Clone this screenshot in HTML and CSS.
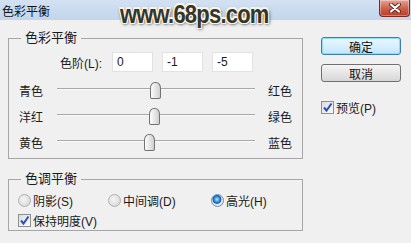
FILE: index.html
```html
<!DOCTYPE html>
<html lang="zh-CN">
  <head>
    <meta charset="UTF-8" />
    <title>色彩平衡</title>
    <link rel="stylesheet" href="styles.css">
  </head>
  <body>
    <header class="titlebar">
      <span class="title">色彩平衡</span>
      <button class="close" aria-label="关闭">
        <svg width="14" height="10" viewBox="0 0 14 10">
          <path d="M3 1.5 L11 8.5 M11 1.5 L3 8.5" stroke="#5a2a22" stroke-width="4" stroke-linecap="round" />
          <path d="M3 1.5 L11 8.5 M11 1.5 L3 8.5" stroke="#ffffff" stroke-width="2.2" stroke-linecap="round" />
        </svg>
      </button>
      <span class="watermark">www.68ps.com</span>
    </header>

    <div class="dialog">
      <div class="main">
        <fieldset class="group balance">
          <legend>色彩平衡</legend>
          <div class="levels">
            <label class="levels-label">色阶(L):</label>
            <input class="field" value="0" />
            <input class="field" value="-1" />
            <input class="field" value="-5" />
          </div>

          <div class="slider-row">
            <span class="slider-left">青色</span>
            <div class="track"><span class="thumb" style="left: 49.5%"></span></div>
            <span class="slider-right">红色</span>
          </div>
          <div class="slider-row">
            <span class="slider-left">洋红</span>
            <div class="track"><span class="thumb" style="left: 49%"></span></div>
            <span class="slider-right">绿色</span>
          </div>
          <div class="slider-row">
            <span class="slider-left">黄色</span>
            <div class="track"><span class="thumb" style="left: 46.7%"></span></div>
            <span class="slider-right">蓝色</span>
          </div>
        </fieldset>

        <fieldset class="group tone">
          <legend>色调平衡</legend>
          <div class="radios">
            <label class="radio-item shadows"><span class="radio"></span>阴影(S)</label>
            <label class="radio-item midtones"><span class="radio"></span>中间调(D)</label>
            <label class="radio-item"><span class="radio checked"></span>高光(H)</label>
          </div>
          <label class="check-item">
            <span class="checkbox">
              <svg width="11" height="11" viewBox="0 0 11 11">
                <path d="M2 5.5 L4.5 8.5 L9.5 1.5" fill="none" stroke="#2d4fb8" stroke-width="2" />
              </svg>
            </span>
            保持明度(V)
          </label>
        </fieldset>
      </div>

      <div class="side">
        <button class="btn default">确定</button>
        <button class="btn">取消</button>
        <label class="check-item preview">
          <span class="checkbox">
            <svg width="11" height="11" viewBox="0 0 11 11">
              <path d="M2 5.5 L4.5 8.5 L9.5 1.5" fill="none" stroke="#2d4fb8" stroke-width="2" />
            </svg>
          </span>
          预览(P)
        </label>
      </div>
    </div>
  </body>
</html>
```

FILE: styles.css
```css
body {
  margin: 0;
  width: 411px;
  height: 243px;
  overflow: hidden;
  background: #f0f0f0;
  color: #1a1a1a;
  font-family: "Liberation Sans", "Noto Sans CJK SC", sans-serif;
  font-size: 12px;
}

.titlebar {
  position: relative;
  height: 20px;
  background: linear-gradient(#d3e1f2, #c2d5ec);
  display: flex;
  align-items: center;
  padding-left: 2px;
}

.title {
  font-size: 12px;
  color: #111;
}

.close {
  position: absolute;
  right: 1px;
  top: 0;
  width: 31px;
  height: 17px;
  padding: 0;
  border: 1px solid #7b2b1e;
  border-top: none;
  border-radius: 0 0 4px 4px;
  background: linear-gradient(#e7a594, #d0634d 50%, #bc3b25);
  box-shadow: inset 0 0 0 1px rgba(255, 255, 255, 0.35);
  display: flex;
  align-items: center;
  justify-content: center;
}

.watermark {
  position: absolute;
  left: 120px;
  top: 1px;
  line-height: 22px;
  font-family: "Liberation Sans", sans-serif;
  font-weight: bold;
  font-size: 22px;
  letter-spacing: -0.8px;
  color: #36352a;
  transform: scaleY(1.2);
  transform-origin: top left;
  text-shadow: 1px 1px 0 #f6f5e8, -1px -1px 0 #f6f5e8, 1px -1px 0 #f6f5e8,
    -1px 1px 0 #f6f5e8, 0 1px 0 #f6f5e8, 0 -1px 0 #f6f5e8, 1px 0 0 #f6f5e8,
    -1px 0 0 #f6f5e8, 0 0 2px #1e1e1e, 1px 1px 3px #1e1e1e;
}

.dialog {
  display: flex;
  padding: 10px 0 0 8px;
  gap: 18px;
}

.main {
  width: 295px;
}

.group {
  margin: 0;
  border: 1px solid #a6a6a6;
  min-width: 0;
}

.group legend {
  font-size: 13px;
  line-height: 16px;
  padding: 0 4px;
  margin-left: 2px;
}

.balance {
  padding: 6px 10px 3px 10px;
}

.levels {
  display: flex;
  align-items: center;
  height: 20px;
  margin-bottom: 5px;
}

.levels-label {
  width: 83px;
  margin-right: 10px;
  text-align: right;
}

.field {
  box-sizing: border-box;
  width: 41px;
  height: 20px;
  margin: 0 9px 0 0;
  padding: 0 4px;
  border: 1px solid #e2e2e2;
  background: #fff;
  font-family: inherit;
  font-size: 12px;
  color: #1a1a1a;
}

.slider-row {
  display: flex;
  align-items: center;
  height: 26px;
}

.slider-left {
  width: 38px;
}

.track {
  position: relative;
  width: 198px;
  height: 0;
  border-top: 1px solid #a8a8a8;
  border-bottom: 1px solid #fbfbfb;
  margin-top: -2px;
}

.thumb {
  position: absolute;
  top: -7px;
  width: 9px;
  height: 15px;
  margin-left: -5px;
  border: 1px solid #727272;
  border-radius: 5px 5px 2px 2px / 6px 6px 2px 2px;
  background: linear-gradient(90deg, #fdfdfd, #e2e2e2 60%, #cfcfcf);
}

.slider-right {
  margin-left: 13px;
}

.tone {
  margin-top: 12px;
  padding: 3px 9px 0 9px;
}

.tone legend {
  margin-left: 3px;
}

.radios {
  display: flex;
  align-items: center;
  height: 20px;
}

.radio-item,
.check-item {
  display: flex;
  align-items: center;
  gap: 2px;
}

.shadows {
  width: 90px;
}

.midtones {
  width: 103px;
}

.radio {
  box-sizing: border-box;
  width: 13px;
  height: 13px;
  border: 1px solid #b0b0b0;
  border-radius: 50%;
  background: radial-gradient(circle at 40% 40%, #f2f2f2 10%, #d4d4d4 90%);
}

.radio.checked {
  border-color: #6e8bb0;
  background: radial-gradient(circle at 45% 40%, #bfe8ff 0, #2d8ed8 30%, #165ea6 45%, #e8eef4 55%, #cdd6df 100%);
}

.check-item {
  height: 20px;
}

.checkbox {
  box-sizing: border-box;
  width: 13px;
  height: 13px;
  border: 1px solid #8e8f8f;
  background: linear-gradient(135deg, #dcdcdc, #fbfbfb);
  display: flex;
  align-items: center;
  justify-content: center;
}

.side {
  width: 80px;
  display: flex;
  flex-direction: column;
  padding-top: 7px;
}

.btn {
  box-sizing: border-box;
  height: 18px;
  margin: 0 0 9px 0;
  padding: 0;
  border: 1px solid #707070;
  border-radius: 3px;
  background: linear-gradient(#f4f4f4, #e6e6e6 50%, #d6d6d6);
  font-family: inherit;
  font-size: 12px;
  color: #111;
}

.btn.default {
  border-color: #3c7fb1;
  background: linear-gradient(#eaf6fd, #d9f0fc 50%, #bee6fd);
  box-shadow: inset 0 0 0 1px #8fdcf8;
}

.preview {
  margin-top: 6px;
}
```
